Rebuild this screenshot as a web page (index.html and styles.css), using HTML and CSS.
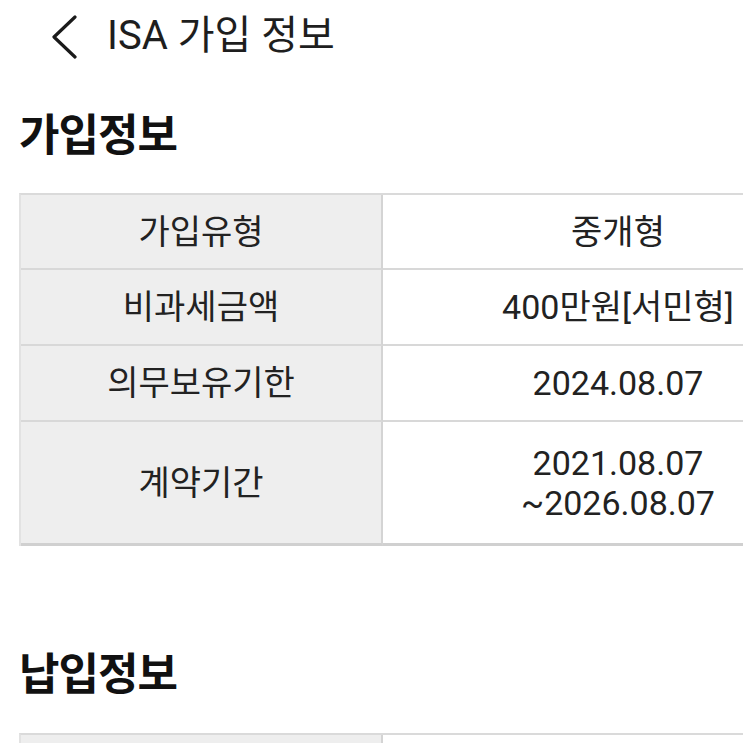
FILE: index.html
```html
<!DOCTYPE html>
<html lang="ko">
<head>
<meta charset="utf-8">
<title>ISA 가입 정보</title>
<link rel="stylesheet" href="styles.css">
</head>
<body>
<header class="topbar">
  <span class="back">
    <svg width="30" height="44" viewBox="0 0 30 44"><path d="M25 2 L4 22 L25 42" fill="none" stroke="#1a1a1a" stroke-width="3.2" stroke-linecap="round" stroke-linejoin="round"/></svg>
  </span>
  <h1 class="title">ISA 가입 정보</h1>
</header>

<section class="section">
  <h2 class="heading">가입정보</h2>
  <div class="info-table">
    <div class="cell label r1">가입유형</div>
    <div class="cell value r1">중개형</div>
    <div class="cell label r2">비과세금액</div>
    <div class="cell value r2">400만원[서민형]</div>
    <div class="cell label r3">의무보유기한</div>
    <div class="cell value r3">2024.08.07</div>
    <div class="cell label r4 last">계약기간</div>
    <div class="cell value r4 last">2021.08.07<br>~2026.08.07</div>
  </div>
</section>

<section class="section second">
  <h2 class="heading">납입정보</h2>
  <div class="info-table short">
    <div class="cell label r1"></div>
    <div class="cell value r1"></div>
  </div>
</section>
</body>
</html>
```

FILE: styles.css
```css
html, body {
  margin: 0;
  padding: 0;
  overflow: hidden;
  background: #ffffff;
}
body {
  font-family: Roboto, "Noto Sans CJK KR", sans-serif;
  color: #222222;
  width: 743px;
}
.topbar {
  display: flex;
  align-items: center;
  height: 72px;
  padding-left: 50px;
}
.back {
  display: flex;
  width: 30px;
  height: 44px;
  margin-top: 2px;
}
.title {
  margin: 0 0 0 27px;
  font-size: 40px;
  font-weight: 400;
  line-height: 48px;
  color: #1e1e1e;
}
.section {
  padding-left: 19px;
}
.heading {
  margin: 36px 0 29px 0;
  font-size: 44px;
  font-weight: 700;
  line-height: 56px;
  letter-spacing: -1px;
  color: #111111;
}
.second .heading {
  margin-top: 101px;
  margin-bottom: 30px;
}
.info-table {
  display: grid;
  grid-template-columns: 362px 470px;
  border-top: 2px solid #dadada;
  border-left: 2px solid #e2e2e2;
}
.cell {
  display: flex;
  align-items: center;
  justify-content: center;
  text-align: center;
  font-size: 34px;
  line-height: 40px;
  border-bottom: 2px solid #d8d8d8;
}
.label {
  background: #eeeeee;
  border-right: 2px solid #d4d4d4;
}
.value {
  background: #ffffff;
}
.r1 { height: 73px; }
.r2, .r3 { height: 74px; }
.r4 { height: 121px; }
.last { border-bottom: 3px solid #d0d0d0; }
```
